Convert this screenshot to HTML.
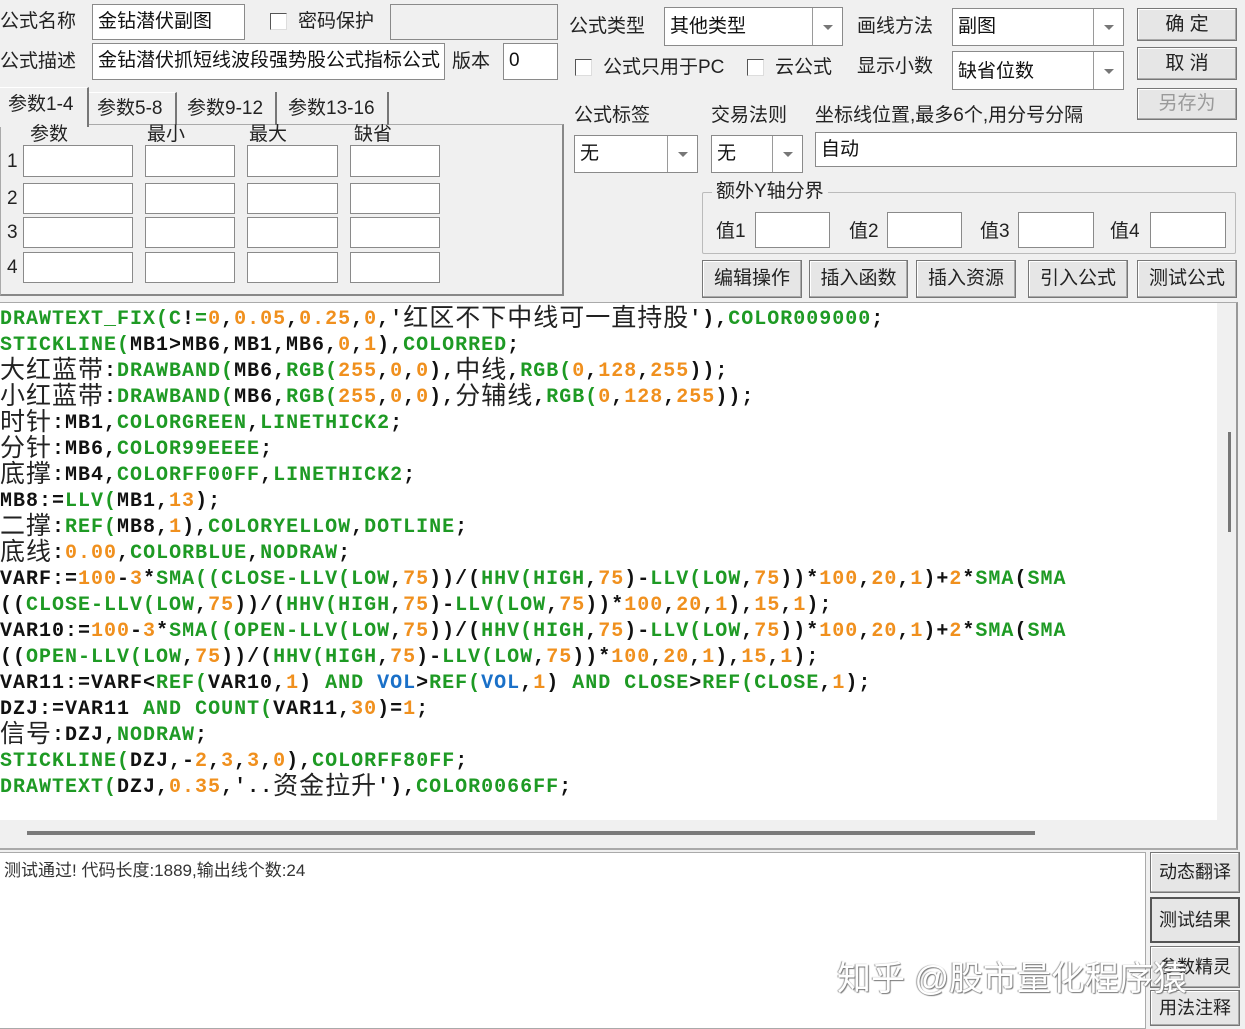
<!DOCTYPE html>
<html><head><meta charset="utf-8">
<style>
*{margin:0;padding:0;box-sizing:border-box}
body{width:1245px;height:1029px;background:#f0f0f0;position:relative;overflow:hidden;font-family:"Liberation Sans","Noto Sans CJK SC",sans-serif;color:#111}
.a{position:absolute}
.lb{position:absolute;font-size:19px;line-height:22px;white-space:nowrap;color:#222}
.in{position:absolute;background:#fff;border:1px solid #8a8a8a;font-size:19px;line-height:34px;padding-left:5px;white-space:nowrap;overflow:hidden}
.sel{position:absolute;background:#fff;border:1px solid #8a8a8a;font-size:19px;padding-left:5px;white-space:nowrap}
.sel .ar{position:absolute;right:0;top:0;bottom:0;width:30px;border-left:1px solid #9a9a9a}
.sel .ar:after{content:"";position:absolute;left:10px;top:50%;margin-top:-2px;border-left:5px solid transparent;border-right:5px solid transparent;border-top:5px solid #777}
.cb{position:absolute;width:17px;height:17px;background:#fff;border:1px solid #555;border-right-color:#ddd;border-bottom-color:#ddd}
.bt{position:absolute;background:#e6e6e6;border:1px solid #777;box-shadow:inset -1px -1px 0 #aaa,inset 1px 1px 0 #fff;font-size:19px;text-align:center;white-space:nowrap;color:#222}
.code{position:absolute;left:0;top:307px;font-family:"Liberation Mono",monospace;font-weight:bold;font-size:20px;letter-spacing:1px;color:#111}
.code div{height:26px;line-height:26px;white-space:pre;overflow:visible}
.g{color:#1e9a24}.o{color:#f0901e}.b{color:#1a70c8}
.c{font-family:"Liberation Sans","Noto Sans CJK SC",sans-serif;font-weight:normal;font-size:25px;letter-spacing:1px;line-height:20px;color:#222;display:inline-block;vertical-align:top;margin-top:1px}
</style></head><body>
<div class="lb" style="left:0;top:11px">公式名称</div>
<div class="in" style="left:92px;top:4px;width:153px;height:36px">金钻潜伏副图</div>
<div class="cb" style="left:270px;top:13px"></div>
<div class="lb" style="left:298px;top:11px">密码保护</div>
<div class="in" style="left:390px;top:4px;width:168px;height:36px;background:#f0f0f0"></div>
<div class="lb" style="left:0;top:51px">公式描述</div>
<div class="in" style="left:92px;top:43px;width:353px;height:37px">金钻潜伏抓短线波段强势股公式指标公式</div>
<div class="lb" style="left:452px;top:51px">版本</div>
<div class="in" style="left:503px;top:43px;width:55px;height:37px">0</div>

<div class="a" style="left:0;top:124px;width:564px;height:172px;border:1px solid #aaa;border-right:2px solid #888;border-bottom:2px solid #888"></div>
<div class="a" style="left:0;top:87px;width:89px;height:40px;background:#f0f0f0;border-right:2px solid #777;border-top:1px solid #fff"></div>
<div class="lb" style="left:8px;top:94px">参数1-4</div>
<div class="a" style="left:89px;top:92px;width:88px;height:33px;border-right:2px solid #777;border-top:1px solid #fff"></div>
<div class="lb" style="left:97px;top:98px">参数5-8</div>
<div class="a" style="left:177px;top:92px;width:100px;height:33px;border-right:2px solid #777"></div>
<div class="lb" style="left:187px;top:98px">参数9-12</div>
<div class="a" style="left:277px;top:92px;width:112px;height:33px;border-right:2px solid #777"></div>
<div class="lb" style="left:288px;top:98px">参数13-16</div>
<div class="lb" style="left:30px;top:124px">参数</div>
<div class="lb" style="left:147px;top:124px">最小</div>
<div class="lb" style="left:249px;top:124px">最大</div>
<div class="lb" style="left:354px;top:124px">缺省</div>
<div class="lb" style="left:7px;top:151px">1</div>
<div class="lb" style="left:7px;top:188px">2</div>
<div class="lb" style="left:7px;top:222px">3</div>
<div class="lb" style="left:7px;top:257px">4</div>
<div class="in" style="left:23px;top:145px;width:110px;height:32px"></div>
<div class="in" style="left:145px;top:145px;width:90px;height:32px"></div>
<div class="in" style="left:247px;top:145px;width:91px;height:32px"></div>
<div class="in" style="left:350px;top:145px;width:90px;height:32px"></div>
<div class="in" style="left:23px;top:183px;width:110px;height:31px"></div>
<div class="in" style="left:145px;top:183px;width:90px;height:31px"></div>
<div class="in" style="left:247px;top:183px;width:91px;height:31px"></div>
<div class="in" style="left:350px;top:183px;width:90px;height:31px"></div>
<div class="in" style="left:23px;top:217px;width:110px;height:31px"></div>
<div class="in" style="left:145px;top:217px;width:90px;height:31px"></div>
<div class="in" style="left:247px;top:217px;width:91px;height:31px"></div>
<div class="in" style="left:350px;top:217px;width:90px;height:31px"></div>
<div class="in" style="left:23px;top:252px;width:110px;height:31px"></div>
<div class="in" style="left:145px;top:252px;width:90px;height:31px"></div>
<div class="in" style="left:247px;top:252px;width:91px;height:31px"></div>
<div class="in" style="left:350px;top:252px;width:90px;height:31px"></div>

<div class="lb" style="left:569px;top:16px">公式类型</div>
<div class="sel" style="left:664px;top:7px;width:179px;height:39px;line-height:37px">其他类型<div class="ar"></div></div>
<div class="lb" style="left:857px;top:16px">画线方法</div>
<div class="sel" style="left:952px;top:8px;width:172px;height:38px;line-height:36px">副图<div class="ar"></div></div>
<div class="bt" style="left:1137px;top:8px;width:100px;height:33px;line-height:31px">确&nbsp;定</div>
<div class="bt" style="left:1137px;top:47px;width:100px;height:33px;line-height:31px">取&nbsp;消</div>
<div class="bt" style="left:1137px;top:88px;width:100px;height:32px;line-height:30px;color:#9a9a9a">另存为</div>
<div class="cb" style="left:575px;top:59px"></div>
<div class="lb" style="left:603px;top:57px">公式只用于PC</div>
<div class="cb" style="left:747px;top:59px"></div>
<div class="lb" style="left:775px;top:57px">云公式</div>
<div class="lb" style="left:857px;top:56px">显示小数</div>
<div class="sel" style="left:952px;top:51px;width:172px;height:39px;line-height:39px">缺省位数<div class="ar"></div></div>
<div class="lb" style="left:574px;top:105px">公式标签</div>
<div class="lb" style="left:711px;top:105px">交易法则</div>
<div class="lb" style="left:815px;top:105px">坐标线位置,最多6个,用分号分隔</div>
<div class="sel" style="left:574px;top:135px;width:124px;height:38px;line-height:36px">无<div class="ar"></div></div>
<div class="sel" style="left:711px;top:135px;width:92px;height:38px;line-height:36px">无<div class="ar"></div></div>
<div class="in" style="left:815px;top:132px;width:422px;height:35px;line-height:33px">自动</div>
<div class="a" style="left:702px;top:192px;width:534px;height:62px;border:1px solid #bbb;border-radius:2px"></div>
<div class="lb" style="left:712px;top:181px;background:#f0f0f0;padding:0 4px">额外Y轴分界</div>
<div class="lb" style="left:716px;top:221px">值1</div>
<div class="in" style="left:755px;top:212px;width:75px;height:36px"></div>
<div class="lb" style="left:849px;top:221px">值2</div>
<div class="in" style="left:887px;top:212px;width:75px;height:36px"></div>
<div class="lb" style="left:980px;top:221px">值3</div>
<div class="in" style="left:1018px;top:212px;width:76px;height:36px"></div>
<div class="lb" style="left:1110px;top:221px">值4</div>
<div class="in" style="left:1150px;top:212px;width:76px;height:36px"></div>
<div class="bt" style="left:702px;top:260px;width:100px;height:38px;line-height:36px">编辑操作</div>
<div class="bt" style="left:809px;top:260px;width:99px;height:38px;line-height:36px">插入函数</div>
<div class="bt" style="left:916px;top:260px;width:100px;height:38px;line-height:36px">插入资源</div>
<div class="bt" style="left:1028px;top:260px;width:100px;height:38px;line-height:36px">引入公式</div>
<div class="bt" style="left:1137px;top:260px;width:100px;height:38px;line-height:36px">测试公式</div>

<div class="a" style="left:0;top:302px;width:1238px;height:548px;border-top:1px solid #aaa;border-right:2px solid #999;border-bottom:2px solid #aaa"></div>
<div class="a" style="left:0;top:303px;width:1217px;height:517px;background:#fff"></div>
<div class="a" style="left:1228px;top:432px;width:3px;height:100px;background:#777"></div>
<div class="a" style="left:27px;top:831px;width:1008px;height:4px;background:#7a7a7a"></div>
<div class="code">
<div><span class="g">DRAWTEXT_FIX(C</span>!<span class="g">=</span><span class="o">0</span>,<span class="o">0.05</span>,<span class="o">0.25</span>,<span class="o">0</span>,'<span class="c">红区不下中线可一直持股</span>'),<span class="g">COLOR009000</span>;</div>
<div><span class="g">STICKLINE(</span>MB1&gt;MB6,MB1,MB6,<span class="o">0</span>,<span class="o">1</span>),<span class="g">COLORRED</span>;</div>
<div><span class="c">大红蓝带</span>:<span class="g">DRAWBAND(</span>MB6,<span class="g">RGB(</span><span class="o">255</span>,<span class="o">0</span>,<span class="o">0</span>),<span class="c">中线</span>,<span class="g">RGB(</span><span class="o">0</span>,<span class="o">128</span>,<span class="o">255</span>));</div>
<div><span class="c">小红蓝带</span>:<span class="g">DRAWBAND(</span>MB6,<span class="g">RGB(</span><span class="o">255</span>,<span class="o">0</span>,<span class="o">0</span>),<span class="c">分辅线</span>,<span class="g">RGB(</span><span class="o">0</span>,<span class="o">128</span>,<span class="o">255</span>));</div>
<div><span class="c">时针</span>:MB1,<span class="g">COLORGREEN</span>,<span class="g">LINETHICK2</span>;</div>
<div><span class="c">分针</span>:MB6,<span class="g">COLOR99EEEE</span>;</div>
<div><span class="c">底撑</span>:MB4,<span class="g">COLORFF00FF</span>,<span class="g">LINETHICK2</span>;</div>
<div>MB8:=<span class="g">LLV(</span>MB1,<span class="o">13</span>);</div>
<div><span class="c">二撑</span>:<span class="g">REF(</span>MB8,<span class="o">1</span>),<span class="g">COLORYELLOW</span>,<span class="g">DOTLINE</span>;</div>
<div><span class="c">底线</span>:<span class="o">0.00</span>,<span class="g">COLORBLUE</span>,<span class="g">NODRAW</span>;</div>
<div>VARF:=<span class="o">100</span>-<span class="o">3</span>*<span class="g">SMA((CLOSE-LLV(LOW</span>,<span class="o">75</span>))/(<span class="g">HHV(HIGH</span>,<span class="o">75</span>)-<span class="g">LLV(LOW</span>,<span class="o">75</span>))*<span class="o">100</span>,<span class="o">20</span>,<span class="o">1</span>)+<span class="o">2</span>*<span class="g">SMA</span>(<span class="g">SMA</span></div>
<div>((<span class="g">CLOSE-LLV(LOW</span>,<span class="o">75</span>))/(<span class="g">HHV(HIGH</span>,<span class="o">75</span>)-<span class="g">LLV(LOW</span>,<span class="o">75</span>))*<span class="o">100</span>,<span class="o">20</span>,<span class="o">1</span>),<span class="o">15</span>,<span class="o">1</span>);</div>
<div>VAR10:=<span class="o">100</span>-<span class="o">3</span>*<span class="g">SMA((OPEN-LLV(LOW</span>,<span class="o">75</span>))/(<span class="g">HHV(HIGH</span>,<span class="o">75</span>)-<span class="g">LLV(LOW</span>,<span class="o">75</span>))*<span class="o">100</span>,<span class="o">20</span>,<span class="o">1</span>)+<span class="o">2</span>*<span class="g">SMA</span>(<span class="g">SMA</span></div>
<div>((<span class="g">OPEN-LLV(LOW</span>,<span class="o">75</span>))/(<span class="g">HHV(HIGH</span>,<span class="o">75</span>)-<span class="g">LLV(LOW</span>,<span class="o">75</span>))*<span class="o">100</span>,<span class="o">20</span>,<span class="o">1</span>),<span class="o">15</span>,<span class="o">1</span>);</div>
<div>VAR11:=VARF&lt;<span class="g">REF(</span>VAR10,<span class="o">1</span>) <span class="g">AND</span> <span class="b">VOL</span>&gt;<span class="g">REF(</span><span class="b">VOL</span>,<span class="o">1</span>) <span class="g">AND</span> <span class="g">CLOSE</span>&gt;<span class="g">REF(CLOSE</span>,<span class="o">1</span>);</div>
<div>DZJ:=VAR11 <span class="g">AND</span> <span class="g">COUNT(</span>VAR11,<span class="o">30</span>)=<span class="o">1</span>;</div>
<div><span class="c">信号</span>:DZJ,<span class="g">NODRAW</span>;</div>
<div><span class="g">STICKLINE(</span>DZJ,-<span class="o">2</span>,<span class="o">3</span>,<span class="o">3</span>,<span class="o">0</span>),<span class="g">COLORFF80FF</span>;</div>
<div><span class="g">DRAWTEXT(</span>DZJ,<span class="o">0.35</span>,'..<span class="c">资金拉升</span>'),<span class="g">COLOR0066FF</span>;</div>
</div>

<div class="a" style="left:0;top:852px;width:1146px;height:177px;background:#fff;border:1px solid #aaa;border-left:none"></div>
<div class="lb" style="left:4px;top:860px;font-size:17px;color:#333">测试通过! 代码长度:1889,输出线个数:24</div>
<div class="bt" style="left:1150px;top:852px;width:90px;height:41px;line-height:39px;font-size:18px">动态翻译</div>
<div class="bt" style="left:1150px;top:897px;width:90px;height:46px;line-height:42px;font-size:18px;border:2px solid #555;box-shadow:none">测试结果</div>
<div class="bt" style="left:1150px;top:946px;width:90px;height:42px;line-height:40px;font-size:18px">参数精灵</div>
<div class="bt" style="left:1150px;top:990px;width:90px;height:36px;line-height:34px;font-size:18px">用法注释</div>
<div class="a" style="left:837px;top:958px;font-size:34px;line-height:42px;color:#fff;white-space:nowrap;text-shadow:1px 1px 1px #777,-1px 0 1px #999">知乎 @股市量化程序猿</div>
</body></html>
